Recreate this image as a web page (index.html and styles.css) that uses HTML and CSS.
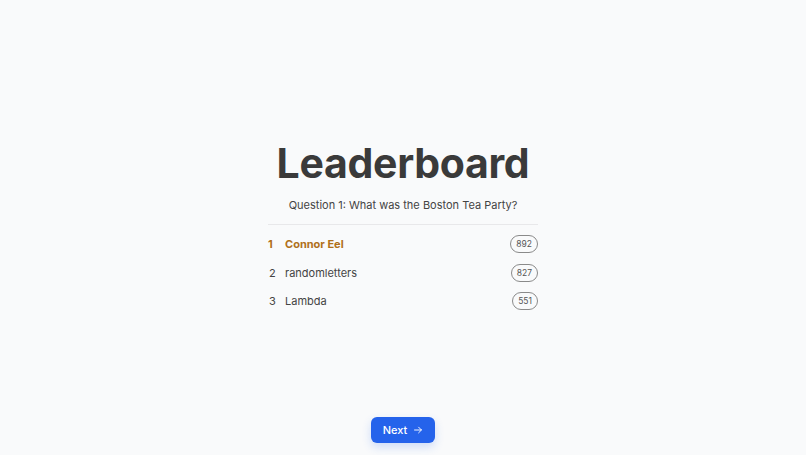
FILE: index.html
```html
<!DOCTYPE html>
<html>
<head>
<meta charset="utf-8">
<link rel="stylesheet" href="styles.css">
</head>
<body>
<div class="page">
  <main class="board">
    <h1 class="title">Leaderboard</h1>
    <p class="question">Question 1: What was the Boston Tea Party?</p>
    <ol class="list">
      <li class="row first"><span class="rank">1</span><span class="name">Connor Eel</span><span class="score">892</span></li>
      <li class="row"><span class="rank">2</span><span class="name">randomletters</span><span class="score">827</span></li>
      <li class="row"><span class="rank">3</span><span class="name">Lambda</span><span class="score">551</span></li>
    </ol>
  </main>
  <footer class="footer">
    <button class="next">Next
      <svg class="arrow" viewBox="0 0 16 16" width="10" height="10" fill="none" stroke="currentColor" stroke-width="1.5" stroke-linecap="round" stroke-linejoin="round"><path d="M2.5 8h11M9 3.5l4.5 4.5-4.5 4.5"/></svg>
    </button>
  </footer>
</div>
</body>
</html>
```
FILE: styles.css
```css
* { box-sizing: border-box; }
html, body { margin: 0; padding: 0; }
body {
  background: #f9fafb;
  font-family: Inter, "Noto Sans", sans-serif;
  color: #3f3f46;
}
.page {
  height: 455px;
  display: flex;
  flex-direction: column;
  align-items: center;
}
.board {
  flex: 1;
  width: 270px;
  padding-top: 139px;
  display: flex;
  flex-direction: column;
  align-items: stretch;
}
.title {
  margin: 0;
  font-size: 41px;
  font-weight: 700;
  line-height: 48px;
  text-align: center;
  color: #3a3a3a;
  letter-spacing: -0.3px;
}
.question {
  margin: 10px 0 0;
  font-size: 11px;
  line-height: 16px;
  text-align: center;
  color: #444;
  padding-bottom: 11px;
  border-bottom: 1px solid #e8e8ea;
}
.list {
  list-style: none;
  margin: 5px 0 0;
  padding: 0;
}
.row {
  display: flex;
  align-items: center;
  height: 28.5px;
  font-size: 11px;
  color: #444;
}
.rank { width: 17px; padding-left: 1px; }
.name { flex: 1; }
.first { color: #b0701a; font-weight: 700; }
.first .rank { padding-left: 0; }
.score {
  font-size: 8.5px;
  font-weight: 400;
  color: #555;
  border: 1px solid #8a8a8a;
  border-radius: 9px;
  height: 18px;
  padding: 0 5px;
  display: flex;
  align-items: center;
}
.footer {
  padding-bottom: 12px;
}
.next {
  background: #2563eb;
  color: #fff;
  border: none;
  border-radius: 6px;
  height: 26px;
  padding: 0 12px;
  font-family: inherit;
  font-size: 11px;
  font-weight: 500;
  display: flex;
  align-items: center;
  gap: 6px;
  box-shadow: 0 4px 10px rgba(37, 99, 235, 0.2);
}
.arrow { display: block; }
```
